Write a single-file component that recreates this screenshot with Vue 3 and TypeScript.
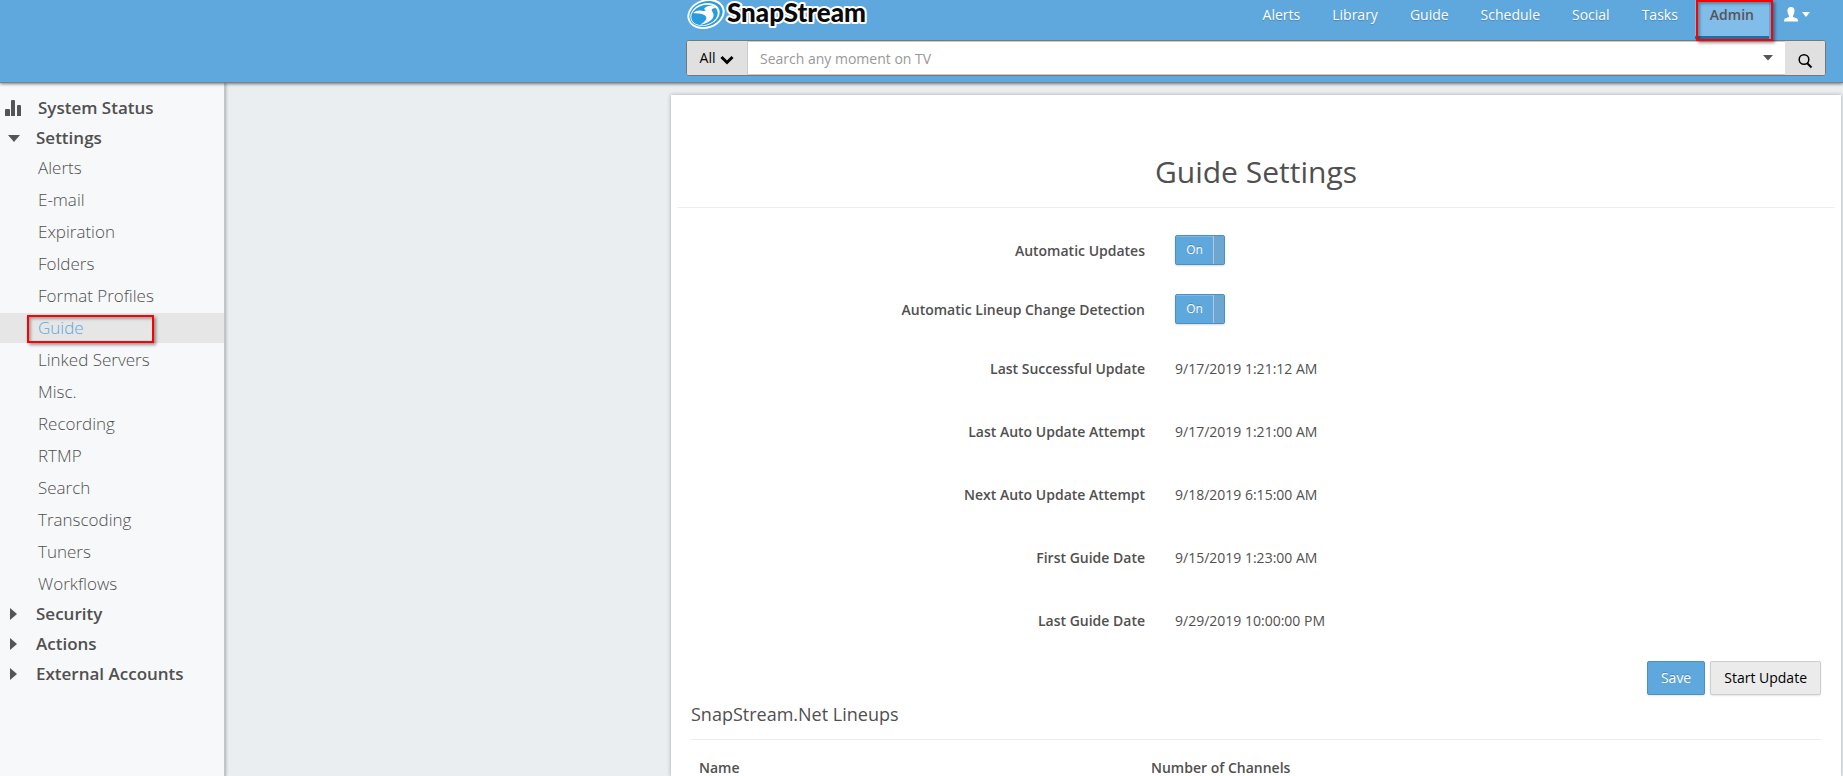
<script setup lang="ts">
import { ref } from 'vue'

interface NavItem { label: string; active?: boolean }
interface Toggle { id: string; label: string }
interface Fact { label: string; value: string }

const nav: NavItem[] = [
  { label: 'Alerts' },
  { label: 'Library' },
  { label: 'Guide' },
  { label: 'Schedule' },
  { label: 'Social' },
  { label: 'Tasks' },
  { label: 'Admin', active: true },
]

const settings: string[] = [
  'Alerts', 'E-mail', 'Expiration', 'Folders', 'Format Profiles', 'Guide', 'Linked Servers',
  'Misc.', 'Recording', 'RTMP', 'Search', 'Transcoding', 'Tuners', 'Workflows',
]
const current = ref('Guide')
const closedGroups: string[] = ['Security', 'Actions', 'External Accounts']

const toggles: Toggle[] = [
  { id: 'auto-updates', label: 'Automatic Updates' },
  { id: 'lineup-detection', label: 'Automatic Lineup Change Detection' },
]
const enabled = ref<Record<string, boolean>>({ 'auto-updates': true, 'lineup-detection': true })

const facts: Fact[] = [
  { label: 'Last Successful Update', value: '9/17/2019 1:21:12 AM' },
  { label: 'Last Auto Update Attempt', value: '9/17/2019 1:21:00 AM' },
  { label: 'Next Auto Update Attempt', value: '9/18/2019 6:15:00 AM' },
  { label: 'First Guide Date', value: '9/15/2019 1:23:00 AM' },
  { label: 'Last Guide Date', value: '9/29/2019 10:00:00 PM' },
]
const query = ref('')
</script>

<template>
  <div class="page">
    <header class="header">
      <div class="header-inner">
        <div class="top-row">
          <a href="#" class="logo" aria-label="SnapStream home">
            <svg width="184" height="32" viewBox="0 0 184 32">
              <ellipse cx="20" cy="14" rx="19" ry="14.500" fill="#fff" transform="rotate(-18 20 14)" />
              <ellipse cx="20" cy="14" rx="17" ry="12.500" fill="#2a9bdc" transform="rotate(-18 20 14)" />
              <ellipse cx="19" cy="14.500" rx="15" ry="11" fill="#fff" transform="rotate(-18 19 14.500)" />
              <ellipse cx="18.500" cy="15" rx="13.500" ry="9.800" fill="#2a9bdc" transform="rotate(-18 18.500 15)" />
              <path d="M7 13C10 10 14 10 18 11C20 11 20 10 18 9C21 5 26 5 30 8C27 8 25 9 26 11C30 16 27 22 14 25C20 21 22 18 19 15.500C16 13 11 14 7 13Z" fill="#fff" />
              <text x="41" y="22" class="wordmark">SnapStream</text>
            </svg>
          </a>
          <nav class="nav">
            <a v-for="item in nav" :key="item.label" href="#" class="nav-link" :class="{ active: item.active }">
              {{ item.label }}
              <span v-if="item.active" class="callout callout-nav"></span>
            </a>
            <button type="button" class="user" aria-label="Account">
              <svg width="26" height="16" viewBox="0 0 26 16" fill="#fff">
                <path d="M7 0C9.500 0 10.800 1.500 10.500 4.500C10.300 7 9.200 8 9 9V10L13 11.500C13.800 12 14 13 14 14.500H0C0 13 .2 12 1 11.500L5 10V9C4.800 8 3.700 7 3.500 4.500C3.200 1.500 4.500 0 7 0Z" />
                <path d="M18 5H26L22 10Z" />
              </svg>
            </button>
          </nav>
        </div>
        <form class="search" @submit.prevent>
          <button type="button" class="scope">
            All
            <svg width="14" height="10" viewBox="0 0 14 10" fill="none" stroke="#000" stroke-width="3">
              <path d="M1.500 2L7 7.500L12.500 2" />
            </svg>
          </button>
          <div class="field">
            <input v-model="query" type="text" aria-label="Search" placeholder="Search any moment on TV" />
            <button type="button" class="more" aria-label="Search options">
              <svg width="10" height="6" viewBox="0 0 10 6"><path d="M0 0H10L5 5.500Z" fill="#555" /></svg>
            </button>
          </div>
          <button type="submit" class="go" aria-label="Run search">
            <svg width="16" height="16" viewBox="0 0 16 16" fill="none" stroke="#000">
              <circle cx="7" cy="6.500" r="4.800" stroke-width="1.500" />
              <path d="M10 10L14.500 14.500" stroke-width="2" />
            </svg>
          </button>
        </form>
      </div>
    </header>

    <div class="body">
      <aside class="sidebar">
        <a href="#" class="group status">
          <svg width="17" height="16" viewBox="0 0 17 16" fill="#555">
            <path d="M0 10q0-1 1-1h3q1 0 1 1v6H0zM6 1q0-1 1-1h2q1 0 1 1v15H6zM12 6q0-1 1-1h2q1 0 1 1v10h-4z" />
          </svg>
          System Status
        </a>
        <button type="button" class="group" aria-expanded="true">
          <svg width="12" height="12" viewBox="0 0 12 12" fill="#555"><path d="M0 3H12L6 10Z" /></svg>
          Settings
        </button>
        <ul class="items">
          <li v-for="name in settings" :key="name" :class="{ selected: name === current }">
            <a href="#" @click.prevent="current = name">{{ name }}</a>
            <span v-if="name === current" class="callout callout-item"></span>
          </li>
        </ul>
        <button v-for="name in closedGroups" :key="name" type="button" class="group" aria-expanded="false">
          <svg width="12" height="12" viewBox="0 0 12 12" fill="#555"><path d="M2 0V12L9 6Z" /></svg>
          {{ name }}
        </button>
      </aside>

      <main class="main">
        <section class="card">
          <h1>Guide Settings</h1>
          <div class="content">
            <div v-for="t in toggles" :key="t.id" class="row toggle-row">
              <label :for="t.id">{{ t.label }}</label>
              <span class="switch">
                <input :id="t.id" v-model="enabled[t.id]" type="checkbox" />
                <span class="switch-text">{{ enabled[t.id] ? 'On' : 'Off' }}</span>
                <span class="switch-knob"></span>
              </span>
            </div>
            <dl class="facts">
              <div v-for="f in facts" :key="f.label" class="row fact-row">
                <dt>{{ f.label }}</dt>
                <dd>{{ f.value }}</dd>
              </div>
            </dl>
            <div class="actions">
              <button type="button" class="btn primary">Save</button>
              <button type="button" class="btn">Start Update</button>
            </div>
            <h2>SnapStream.Net Lineups</h2>
            <table class="lineups">
              <thead>
                <tr>
                  <th scope="col" class="name-col">Name</th>
                  <th scope="col">Number of Channels</th>
                </tr>
              </thead>
            </table>
          </div>
        </section>
      </main>
    </div>
  </div>
</template>

<style>
body {
  background: #eaeef1;
}
</style>

<style scoped>
.page {
  height: 100vh;
  overflow: hidden;
  display: flex;
  flex-direction: column;
  font-family: "Open Sans", "Noto Sans", sans-serif;
  font-size: 14px;
  line-height: 20px;
  color: #505050;
  background: #eaeef1;
}
* {
  box-sizing: border-box;
}
a {
  color: inherit;
  text-decoration: none;
}
button,
input {
  font: inherit;
  color: inherit;
}
button {
  border: 0;
  padding: 0;
  background: none;
  cursor: pointer;
}
svg {
  display: block;
  flex: none;
}

.header {
  flex: none;
  position: relative;
  z-index: 2;
  display: flex;
  justify-content: flex-end;
  padding: 0 17px 6px 0;
  background: #5ea8dd;
  border-bottom: 1px solid #77838c;
  box-shadow: 0 1px 3px rgba(0, 0, 0, 0.5);
}
.header-inner {
  width: 1140px;
  max-width: 100%;
}
.top-row {
  display: flex;
  justify-content: space-between;
  height: 40px;
}
.wordmark {
  font: 900 26px Lato, sans-serif;
  fill: #0a0a0a;
  stroke: #fff;
  stroke-width: 4px;
  stroke-linejoin: round;
  paint-order: stroke;
}
.nav {
  display: flex;
  gap: 2px;
  color: #fff;
  padding-right: 16px;
}
.nav-link {
  position: relative;
  height: 39px;
  padding: 5px 15px 0;
  text-shadow: 0 1px 1px rgba(0, 0, 0, 0.2);
}
.nav-link.active {
  font-weight: 600;
  color: #555;
  background: #80bde9;
  border-bottom: 3px solid #1f6fa5;
  text-shadow: none;
}
.callout {
  position: absolute;
  border: 2px solid #f00;
  box-shadow: 2px 2px 3px rgba(0, 0, 0, 0.4), inset 2px 2px 3px rgba(0, 0, 0, 0.3);
  pointer-events: none;
}
.callout-nav {
  inset: 0 -4px -5px 1px;
}
.user {
  display: flex;
  align-self: flex-start;
  margin: 7px 0 0 13px;
}

.search {
  display: flex;
  height: 36px;
  border: 1px solid #777;
  border-radius: 3px;
  overflow: hidden;
  background: #fff;
}
.scope {
  width: 61px;
  display: flex;
  align-items: center;
  justify-content: center;
  gap: 5px;
  color: #000;
  background: #e0e0e0;
  border-right: 1px solid #ccc;
}
.scope svg {
  margin-top: 4px;
}
.field {
  flex: 1;
  display: flex;
  border: solid #ccc;
  border-width: 1px 0;
}
.field input {
  flex: 1;
  min-width: 0;
  border: 0;
  outline: 0;
  padding: 2px 12px 0;
  background: none;
}
.field input::placeholder {
  color: #999;
  opacity: 1;
}
.more {
  width: 34px;
  display: flex;
  align-items: center;
  justify-content: center;
}
.go {
  width: 40px;
  display: flex;
  align-items: center;
  justify-content: center;
  padding-top: 5px;
  background: #e0e0e0;
}

.body {
  flex: 1;
  min-height: 0;
  display: flex;
}
.sidebar {
  flex: none;
  width: 226px;
  padding-top: 10px;
  background: #f7f8fa;
  border-right: 2px solid #c2c5c8;
  box-shadow: 1px 0 2px rgba(0, 0, 0, 0.15);
  font-size: 17px;
}
.group {
  width: 100%;
  height: 30px;
  display: flex;
  align-items: center;
  gap: 16px;
  padding-left: 8px;
  font-weight: 600;
}
.status {
  padding-left: 5px;
}
.items {
  list-style: none;
  margin: 0;
  padding: 0;
}
.items li {
  position: relative;
  margin-bottom: 2px;
}
.items li:last-child {
  margin-bottom: 0;
}
.items a {
  display: block;
  padding-left: 38px;
  line-height: 30px;
  font-weight: 300;
}
.items .selected {
  background: #e6e6e6;
  color: #5ea8dd;
}
.callout-item {
  left: 27px;
  top: 2px;
  width: 127px;
  height: 28px;
}

.main {
  flex: 1;
  min-width: 0;
  display: flex;
  justify-content: flex-end;
  padding: 12px 2px 0 12px;
}
.card {
  width: 1170px;
  max-width: 100%;
  padding: 52px 6px 0;
  background: #fff;
  box-shadow: 0 0 4px rgba(0, 0, 0, 0.3);
}
h1 {
  margin: 0;
  padding: 5px 0 15px;
  font-size: 30px;
  line-height: 40px;
  font-weight: 400;
  text-align: center;
  border-bottom: 1px solid #eee;
}
.content {
  padding: 27px 14px 0;
}
.row {
  display: grid;
  grid-template-columns: 454fr 646fr;
  column-gap: 30px;
}
.row label,
.row dt {
  text-align: right;
  font-weight: 600;
}
.row dd {
  margin: 0;
}
.toggle-row {
  height: 59px;
}
.toggle-row label {
  padding-top: 6px;
}
.switch {
  position: relative;
  display: flex;
  width: 50px;
  height: 30px;
  border: 1px solid #4a90c4;
  border-radius: 2px;
  background: #5ea8dd;
  box-shadow: 0 1px 2px rgba(0, 0, 0, 0.15), inset 0 1px 0 rgba(255, 255, 255, 0.2);
  color: #fff;
}
.switch input {
  position: absolute;
  inset: 0;
  width: 100%;
  height: 100%;
  margin: 0;
  opacity: 0;
  cursor: pointer;
}
.switch-text {
  flex: 1;
  font-size: 12px;
  line-height: 28px;
  text-align: center;
  text-shadow: 0 -1px 0 rgba(0, 0, 0, 0.2);
}
.switch-knob {
  width: 11px;
  border-left: 1px solid #b5c9d8;
  background: #6da6d0;
}
.facts {
  margin: 0;
  padding-top: 6px;
}
.fact-row {
  height: 63px;
}
.actions {
  display: flex;
  justify-content: flex-end;
  gap: 5px;
  margin-top: -13px;
}
.btn {
  height: 34px;
  padding: 0 13px;
  border: 1px solid #ccc;
  border-radius: 2px;
  background: #ebebeb;
  color: #000;
  box-shadow: 0 1px 2px rgba(0, 0, 0, 0.1);
}
.btn.primary {
  background: #5ea8dd;
  border-color: #4a90c4;
  color: #fff;
  text-shadow: 0 -1px 0 rgba(0, 0, 0, 0.2);
}
h2 {
  margin: 0;
  padding: 7px 0 13px;
  font-size: 18px;
  line-height: 24px;
  font-weight: 400;
  border-bottom: 1px solid #eee;
}
.lineups {
  width: 100%;
  margin-top: 10px;
  border-collapse: collapse;
}
.lineups th {
  padding: 8px;
  text-align: left;
  font-weight: 600;
}
.lineups .name-col {
  width: 40%;
}
</style>
